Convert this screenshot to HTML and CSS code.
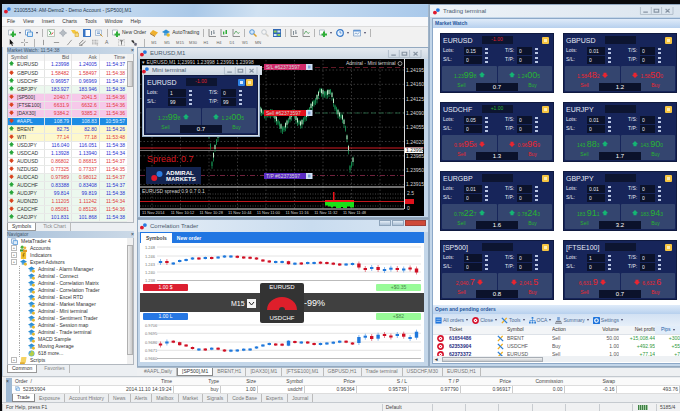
FILE: index.html
```html
<!DOCTYPE html>
<html lang="en">
<head>
    <meta charset="UTF-8">
    <meta name="viewport" content="width=device-width, initial-scale=1.0">
    <title>21005534: AM-Demo2 - Demo Account - [SP500],M1</title>
    <link rel="stylesheet" href="styles.css">
</head>
<body>
    <svg class="defs" aria-hidden="true">
        <symbol id="i-logo" viewBox="0 0 8 8"><circle cx="5.6" cy="2.4" r="2.2" fill="#2a7be0"/><circle cx="2.2" cy="5.2" r="2.2" fill="#e0182c"/></symbol>
        <symbol id="i-win" viewBox="0 0 30 7"><path d="M.5 0v6.500h28.500v-6.500M10 0v6M19 0v6" fill="none" stroke="#a9b6c4" stroke-width=".7"/><path d="M3 4.500h4M12.500 2h4v2.500h-4zM22.500 1.800l3.500 3M26 1.800l-3.500 3" fill="none" stroke="#8794a3"/></symbol>
        <symbol id="i-up" viewBox="0 0 8 8"><path d="M4 0l4 4-2 .6V7H2V4.600L0 4z" fill="currentColor"/></symbol>
        <symbol id="i-down" viewBox="0 0 8 8"><path d="M4 8L0 4l2-.6V1h4v2.400L8 4z" fill="currentColor"/></symbol>
        <symbol id="i-ea" viewBox="0 0 8 8"><path d="M0 3l4-2.500L8 3 4 5z" fill="#2e8fd4"/><path d="M2 4.200h4v2.300H2z" fill="#58a9dc"/><circle cx="6.200" cy="6" r="1.700" fill="#e8b92e"/></symbol>
        <symbol id="i-doc" viewBox="0 0 8 8"><path d="M.5 1h5v5h-5z" fill="#fff" stroke="#7ea3cf"/><path d="M2.500 3h5v4.500h-5z" fill="#dcebf9" stroke="#5b9bd8"/></symbol>
        <symbol id="i-people" viewBox="0 0 8 8"><circle cx="2.500" cy="2.500" r="1.800" fill="#4caf3b"/><path d="M0 7.500V5h5v2.500z" fill="#3c9b34"/><circle cx="5.600" cy="3.200" r="1.600" fill="#f0b43c"/><path d="M3.500 8V5.400h4.500V8z" fill="#e19b26"/></symbol>
        <symbol id="i-fx" viewBox="0 0 8 8"><path d="M1 0h6v8H1z" fill="#f3c22e"/><path d="M5.500 1.500H4.200L3.600 6M2.800 3.600h2.400" fill="none" stroke="#8b6510" stroke-width=".8"/></symbol>
        <symbol id="i-globe" viewBox="0 0 8 8"><circle cx="4" cy="4" r="3.500" fill="#58a9dc"/><path d="M1 5q3-3 3-4.500Q8 2 6.500 6q-3 2-5.500-1z" fill="#b5cf45"/></symbol>
        <symbol id="i-script" viewBox="0 0 8 8"><path d="M1.500 0h6l-1 6.500h-6z" fill="#f6d363"/><path d="M0 6h5.500v2H0z" fill="#e3ad2b"/></symbol>
        <symbol id="i-add" viewBox="0 0 8 8"><path d="M.5 1h5v5h-5z" fill="#fff" stroke="#9aa7b5" stroke-width=".7"/><path d="M4 2.500h2v2h2v2H6v1.500H4V6.500H2.500v-2H4z" fill="#2fae38"/></symbol>
        <symbol id="i-market" viewBox="0 0 8 8"><path d="M.5.500h7v7h-7z" fill="#f8faf7" stroke="#9fb0a0" stroke-width=".7"/><path d="M2 1.500l2 2.500L2.500 6" fill="none" stroke="#3aa64b"/><path d="M4.500 5.500l1.500-2" stroke="#d33"/></symbol>
        <symbol id="i-target" viewBox="0 0 8 8"><circle cx="4" cy="4" r="2.200" fill="none" stroke="#8b96a1" stroke-width=".8"/><path d="M4 0v8M0 4h8" stroke="#8b96a1" stroke-width=".7"/></symbol>
        <symbol id="i-star" viewBox="0 0 8 8"><path d="M0 1h4l1 1.500h2v2H2z" fill="#f5c73d"/><path d="M4 4h3.500v3.500H4z" fill="#f7dc7f" stroke="#d59f25" stroke-width=".6"/></symbol>
        <symbol id="i-panel" viewBox="0 0 8 8"><path d="M.5.500h7v7h-7z" fill="#fff" stroke="#3975c4"/><path d="M0 0h2.500v8H0z" fill="#3975c4"/></symbol>
        <symbol id="i-tester" viewBox="0 0 8 8"><path d="M.5 1h6v5.500h-6z" fill="#eef4fb" stroke="#8fa9c9" stroke-width=".7"/><path d="M2 3h3M2 4.500h3" stroke="#5f8bc0" stroke-width=".7"/><path d="M5 5l2.500 2.500" stroke="#d69a2b"/></symbol>
        <symbol id="i-book" viewBox="0 0 8 8"><path d="M0 4l3-3 5 2.500L5 7z" fill="#efb02d"/><path d="M0 4l5 3v1L0 5z" fill="#a86b18"/></symbol>
        <symbol id="i-bars" viewBox="0 0 8 8"><path d="M1 0v7.500h7" fill="none" stroke="#777" stroke-width=".8"/><path d="M3.500 2v4M5.800 1v4M3 3h.5M5.800 4h1" stroke="#6b7884" stroke-width=".8"/></symbol>
        <symbol id="i-candles" viewBox="0 0 8 8"><path d="M1 0v7.500h7" fill="none" stroke="#777" stroke-width=".8"/><path d="M3 2.500h1.300v3H3zM5.500 1h1.500v4H5.500z" fill="#2fae38"/></symbol>
        <symbol id="i-line" viewBox="0 0 8 8"><path d="M1 0v7.500h7" fill="none" stroke="#777" stroke-width=".8"/><path d="M2 5l2-3 2 2.500 1.500-1" fill="none" stroke="#4e9e58" stroke-width=".8"/></symbol>
        <symbol id="i-zoom" viewBox="0 0 8 8"><path d="M4.500 4.500l3 3" stroke="#dba22e" stroke-width="1.500"/><circle cx="3" cy="3" r="2.300" fill="#cfe6fb" stroke="#4a8ed2" stroke-width=".9"/></symbol>
        <symbol id="i-zoomout" viewBox="0 0 8 8"><path d="M4.500 4.500l3 3" stroke="#d0cbc1" stroke-width="1.400"/><circle cx="3" cy="3" r="2.300" fill="#f5f5f5" stroke="#bcc4cb" stroke-width=".9"/></symbol>
        <symbol id="i-tile" viewBox="0 0 8 8"><path d="M0 0h8v8H0z" fill="#2f67b3"/><path d="M.8 1.600h2.800v2H.8zM4.400 5h2.800v2H4.400z" fill="#8fd055"/><path d="M4.400 1.600h2.800v2H4.400zM.8 5h2.800v2H.8z" fill="#d8e7f7"/></symbol>
        <symbol id="i-clock" viewBox="0 0 8 8"><circle cx="4" cy="4" r="3.300" fill="#e9f3fd" stroke="#3577c8" stroke-width="1.200"/><path d="M4 2v2h1.500" fill="none" stroke="#3577c8" stroke-width=".7"/></symbol>
        <symbol id="i-template" viewBox="0 0 8 8"><path d="M.5 1h7v6h-7z" fill="#f3f8fd" stroke="#7398c4" stroke-width=".7"/><path d="M.5 1h7v1.500h-7z" fill="#5f94d4"/><path d="M1.500 5l1.500-1 1.500 1L6.500 3.500" fill="none" stroke="#4879b4" stroke-width=".6"/></symbol>
        <symbol id="i-cursor" viewBox="0 0 8 8"><path d="M2 0v6.500l1.500-1.300L4.600 8l1-.5-1.100-2.500H6.500z" fill="#111"/></symbol>
        <symbol id="i-cross" viewBox="0 0 8 8"><path d="M4 0v3M4 5v3M0 4h3M5 4h3" stroke="#777" stroke-width=".7"/></symbol>
        <symbol id="i-dash" viewBox="0 0 8 8"><path d="M1 4h6" stroke="#777" stroke-width=".8"/></symbol>
        <symbol id="i-vline" viewBox="0 0 8 8"><path d="M4 1v6" stroke="#777" stroke-width=".8"/></symbol>
        <symbol id="i-slash" viewBox="0 0 8 8"><path d="M1.500 7L6.500 1" stroke="#777" stroke-width=".8"/></symbol>
        <symbol id="i-channel" viewBox="0 0 8 8"><path d="M0 6l5-5M2 7.500l5.500-5M0 7h4" stroke="#555" stroke-width=".8"/></symbol>
        <symbol id="i-fibo" viewBox="0 0 8 8"><path d="M0 1.500h7M0 3.500h7M0 5.500h7M6 5v2.500" stroke="#777" stroke-width=".7" stroke-dasharray="1.200 .5"/></symbol>
        <symbol id="i-label" viewBox="0 0 8 8"><path d="M.5.500h7v7h-7z" fill="none" stroke="#999" stroke-width=".6" stroke-dasharray="1 .7"/><path d="M2 2h4M4 2v4.500" stroke="#444" stroke-width=".8"/></symbol>
        <symbol id="i-arrows" viewBox="0 0 8 8"><path d="M0 2l2.500-1 1.500 3-1 1z" fill="#333"/><path d="M4 4l3 1-1 3-2.500-1z" fill="#667"/></symbol>
        <symbol id="i-close" viewBox="0 0 8 8"><circle cx="4" cy="4" r="3" fill="#fff" stroke="#d6112b" stroke-width="1.800"/><path d="M3 3l2 2M5 3L3 5" stroke="#d6112b" stroke-width=".8"/></symbol>
        <symbol id="i-tools" viewBox="0 0 8 8"><path d="M1 7l5.500-6" stroke="#f2b01e" stroke-width="1.600"/><path d="M1 1l6 6" stroke="#2f7fd6" stroke-width="1.600"/></symbol>
        <symbol id="i-list" viewBox="0 0 8 8"><path d="M.5.500h7v7h-7z" fill="#1c73dc"/><path d="M1.500 2.500h5M1.500 5h5" stroke="#a8ccf5"/></symbol>
        <symbol id="i-tree" viewBox="0 0 8 8"><path d="M3 0h2v2H3zM0 5.500h2v2H0zM3 5.500h2v2H3zM6 5.500h2v2H6z" fill="#2f7fd6"/><path d="M4 2v3.500M1 5.500V4h6v1.500" fill="none" stroke="#2f7fd6" stroke-width=".7"/></symbol>
        <symbol id="i-sum" viewBox="0 0 8 8"><path d="M2.500 0h3v4h-3z" fill="#7ba4d8"/><path d="M0 7h8M1 5h6" stroke="#4b4b55" stroke-width=".9"/></symbol>
        <symbol id="i-gear" viewBox="0 0 8 8"><rect width="8" height="8" rx="1" fill="#1c73dc"/><circle cx="4" cy="4" r="2" fill="none" stroke="#fff" stroke-width="1.300"/></symbol>
    </svg>

    <div class="desktop">
        <header class="app-head">
            <div class="titlebar main-title"><svg class="ico"><use href="#i-logo"/></svg><span>21005534: AM-Demo2 - Demo Account - [SP500],M1</span></div>
            <nav class="menu">
                <button>File</button><button>View</button><button>Insert</button><button>Charts</button><button>Tools</button><button>Window</button><button>Help</button>
            </nav>
            <div class="toolbar" id="toolbar-main"></div>
            <div class="toolbar drawing" id="toolbar-draw"></div>
        </header>

        <aside class="side">
            <h2 class="dock-title">Market Watch: 11:54:38 <b>×</b></h2>
            <div class="dock-body">
                <table class="watch">
                    <thead><tr><th>Symbol</th><th>Bid</th><th>Ask</th><th>Time</th></tr></thead>
                    <tbody id="watch-rows"></tbody>
                </table>
                <div class="vscroll"><i></i></div>
            </div>
            <div class="dock-tabs"><button class="on">Symbols</button><button>Tick Chart</button></div>
            <h2 class="dock-title">Navigator <b>×</b></h2>
            <div class="dock-body">
                <ul class="tree" id="tree"></ul>
                <div class="vscroll nav-scroll"><i></i></div>
            </div>
            <div class="dock-tabs"><button class="on">Common</button><button>Favorites</button></div>
        </aside>

        <main class="mdi">
            <section class="window chart-window">
                <div class="titlebar"><svg class="ico"><use href="#i-logo"/></svg><span>EURUSD,M1</span><svg class="win"><use href="#i-win"/></svg></div>
                <div class="chart-area">
                    <svg class="chart" id="price-chart" viewBox="140 59 284 157"></svg>
                    <div class="mini">
                        <div class="titlebar"><svg class="ico"><use href="#i-logo"/></svg><span>Mini terminal</span><svg class="win"><use href="#i-win"/></svg></div>
                        <div id="mini-card"></div>
                    </div>
                    <div class="brand">
                        <svg class="brand-mark" viewBox="0 0 12 10"><circle cx="8.500" cy="3" r="3" fill="#2a7be0"/><circle cx="3.200" cy="7" r="3" fill="#e0182c"/></svg>
                        <span>ADMIRAL<br>MARKETS</span>
                    </div>
                    <div class="spread-note">Spread: 0.7</div>
                </div>
            </section>

            <section class="window corr-window">
                <div class="titlebar"><svg class="ico"><use href="#i-logo"/></svg><span>Correlation Trader</span><span class="caption-btns"><i></i><i></i><i></i></span></div>
                <div class="corr-tabs"><button class="on">Symbols</button><button>New order</button></div>
                <div class="corr-body">
                    <svg class="corr-chart" id="corr-top" viewBox="140 243 284 40"></svg>
                    <div class="badges"><span class="badge sell">1.00 $</span><span class="badge profit">+$0.35</span></div>
                    <div class="band">
                        <label class="period"><select aria-label="Period"><option>M15</option></select><svg viewBox="0 0 9 9"><path d="M0 0h9v9H0z" fill="#f4f4f4"/><path d="M2 3l2.500 3L7 3" fill="none" stroke="#222"/></svg></label>
                        <div class="gauge">
                            <span>EURUSD</span>
                            <svg viewBox="0 0 32 16"><path d="M1 15a15 13 0 0 1 30 0h-12a3 3 0 0 0-6 0z" fill="#de1f2b"/></svg>
                            <span>USDCHF</span>
                        </div>
                        <span class="percent">-99%</span>
                    </div>
                    <div class="badges"><span class="badge buy">1.00 L</span><span class="badge profit">+$82</span></div>
                    <svg class="corr-chart" id="corr-bottom" viewBox="140 322 284 39"></svg>
                </div>
            </section>
        </main>

        <section class="window terminal">
            <div class="titlebar"><svg class="ico"><use href="#i-logo"/></svg><span>Trading terminal</span><svg class="win"><use href="#i-win"/></svg></div>
            <div class="terminal-body">
                <h3>Market Watch</h3>
                <div class="cards" id="cards"></div>
                <h3>Open and pending orders</h3>
                <div class="order-tools">
                    <button><svg class="ico"><use href="#i-list"/></svg>All orders<i class="caret"></i></button>
                    <button><svg class="ico"><use href="#i-close"/></svg>Close<i class="caret"></i></button>
                    <button><svg class="ico"><use href="#i-tools"/></svg>Tools<i class="caret"></i></button>
                    <button><svg class="ico"><use href="#i-tree"/></svg>OCA<i class="caret"></i></button>
                    <button><svg class="ico"><use href="#i-sum"/></svg>Summary<i class="caret"></i></button>
                    <button><svg class="ico"><use href="#i-gear"/></svg>Settings<i class="caret"></i></button>
                </div>
                <div class="orders-wrap">
                    <table class="orders">
                        <colgroup><col class="c-ico"><col class="c-ticket"><col class="c-ico"><col class="c-symbol"><col class="c-action"><col class="c-vol"><col class="c-profit"><col></colgroup>
                        <thead><tr><th></th><th>Ticket</th><th></th><th>Symbol</th><th>Action</th><th class="num">Volume</th><th class="num">Net profit</th><th class="sorted num">Pips <i class="caret"></i></th></tr></thead>
                        <tbody id="orders"></tbody>
                    </table>
                </div>
                <div class="hscroll"><b>◂</b><i></i></div>
            </div>
        </section>

        <nav class="chart-tabs">
            <button>#AAPL,Daily</button><button class="on">[SP500],M1</button><button>BRENT,H1</button><button>[DAX30],M1</button><button>[FTSE100],M1</button><button>GBPUSD,H1</button><button>Trade terminal</button><button>USDCHF,M30</button><button>EURUSD,H1</button>
        </nav>

        <section class="trade">
            <div class="trade-grip">×</div>
            <div class="trade-main">
                <table class="positions">
                    <colgroup><col class="c-order"><col class="c-time"><col class="c-std"><col class="c-size"><col class="c-std"><col class="c-wide"><col class="c-wide"><col class="c-wide"><col class="c-wide"><col class="c-wide"><col class="c-wide"><col></colgroup>
                    <thead><tr><th>Order &nbsp;/</th><th>Time</th><th>Type</th><th>Size</th><th>Symbol</th><th>Price</th><th>S / L</th><th>T / P</th><th>Price</th><th>Commission</th><th>Swap</th><th></th></tr></thead>
                    <tbody><tr><td><svg class="ico"><use href="#i-doc"/></svg>52353904</td><td>2014.11.10 14:19:24</td><td>buy</td><td>1.00</td><td>usdchf</td><td>0.96364</td><td>0.95739</td><td>0.97790</td><td>0.96917</td><td>0.00</td><td>-0.16</td><td>493.76</td></tr></tbody>
                </table>
                <div class="trade-tabs">
                    <button class="on">Trade</button><button>Exposure</button><button>Account History</button><button>News</button><button>Alerts</button><button>Mailbox</button><button>Market</button><button>Signals</button><button>Code Base</button><button>Experts</button><button>Journal</button>
                </div>
            </div>
        </section>

        <footer class="status">
            <span class="help">For Help, press F1</span>
            <span class="profile">Default</span>
            <span></span><span></span><span></span><span></span><span></span><span></span>
            <span class="signal"><i></i></span>
            <span class="traffic">5185/4</span>
        </footer>
    </div>

    <script src="script.js"></script>
</body>
</html>
```

FILE: styles.css
```css
* {
    box-sizing: border-box;
}

body {
    margin: 0;
    background: #0a0a0c;
    font-family: "Liberation Sans", Arial, sans-serif;
    font-size: 5px;
    line-height: 7px;
    color: #333;
}

button, input, select {
    font: inherit;
    color: inherit;
    margin: 0;
    padding: 0;
    border: 0;
    background: none;
}

h2, h3, ul {
    margin: 0;
    padding: 0;
    font-size: 5px;
    list-style: none;
}

table {
    border-collapse: collapse;
    table-layout: fixed;
    width: 100%;
}

th, td {
    padding: 0;
    font-weight: normal;
    text-align: left;
    white-space: nowrap;
    overflow: hidden;
}

.defs {
    display: none;
}

.ico {
    width: 7px;
    height: 7px;
    flex: none;
}

.win {
    width: 42px;
    height: 8px;
    margin-left: auto;
}

.caret {
    display: inline-block;
    border: 1px solid transparent;
    border-top: 2px solid #446;
    border-bottom: 0;
    margin-left: 1px;
}

.desktop {
    display: grid;
    grid-template-columns: 135px minmax(0, 1fr) 251px;
    grid-template-rows: auto 1fr auto auto auto;
    min-height: 100vh;
    padding: 4px 0 0 2px;
}

/* Title bars and frames */
.titlebar {
    display: flex;
    align-items: center;
    gap: 3px;
    height: 11px;
    padding: 0 2px;
    color: #4a5a6c;
    font-size: 6px;
    white-space: nowrap;
}

.main-title {
    height: 13px;
    font-size: 5px;
    background: linear-gradient(100deg, #b3cfeb, #c6dbf0 25%, #a9c8e8 45%, #cfe1f2 60%, #a8c8ea);
    color: #26384c;
}

.window {
    background: #c3d6e9;
    border: 1px solid #93a9c0;
}

/* Head */
.app-head {
    grid-column: 1 / 3;
    background: #f1f1f1;
    border-right: 1px solid #9fb3c8;
}

.menu {
    display: flex;
    gap: 8px;
    height: 9px;
    padding: 0 5px;
    background: #f7f8fa;
}

.toolbar {
    display: flex;
    align-items: center;
    gap: 4px;
    height: 12px;
    padding-left: 6px;
    white-space: nowrap;
    border-top: 1px solid #dcdcdc;
}

.toolbar button {
    display: flex;
    align-items: center;
    gap: 2px;
    min-width: 8px;
}

.toolbar .ico {
    width: 8px;
    height: 8px;
}

.toolbar .sep {
    width: 1px;
    height: 8px;
    background: #b5b5b5;
}

.drawing {
    height: 9px;
    gap: 5px;
    border: 0;
    color: #666;
}

.drawing .ico {
    width: 7px;
    height: 7px;
}

.drawing .frame {
    min-width: 8px;
    justify-content: center;
    font-size: 4px;
}

/* Left docks */
.side {
    grid-row: 2 / 4;
    display: flex;
    flex-direction: column;
    padding: 0 3px 0 4px;
    background: #eceff2;
    border-left: 1px solid #b5cbe2;
}

.dock-title {
    display: flex;
    justify-content: space-between;
    height: 7px;
    font-weight: normal;
    color: #44586e;
    background: linear-gradient(90deg, #a9c1da, #cbd9e7);
}

.dock-body {
    display: flex;
    background: #fff;
    border: 1px solid #b2b8bf;
    border-top: 0;
}

.watch th {
    height: 7px;
    color: #555;
    background: #f4f4f4;
}

.watch th:first-child {
    width: 36px;
    padding-left: 3px;
}

.watch th + th, .watch td + td {
    text-align: right;
    padding-right: 2px;
    border-left: 1px solid #e4e4e4;
}

.watch td {
    height: 8px;
    border-bottom: 1px solid #e8eae8;
}

.watch td:first-child {
    padding-left: 1px;
}

.watch .ico {
    width: 5px;
    height: 5px;
    margin-right: 3px;
    color: #d9401c;
}

.watch .up .ico {
    color: #27a53a;
}

.watch .up td + td {
    color: #2a31cf;
}

.watch .down td + td {
    color: #e0393b;
}

.watch .pink {
    background: #f6c9ea;
}

.watch .yellow {
    background: #fdf8cc;
}

.watch .green {
    background: #ecf8ee;
}

.watch .selected, .watch .selected td + td {
    background: #1d8ce4;
    color: #e3f2ff;
}

.vscroll {
    flex: none;
    width: 6px;
    background: #f0f0f0;
}

.vscroll i {
    display: block;
    height: 26px;
    margin: 7px 0 0;
    background: linear-gradient(90deg, #eee, #ccc);
    border: 1px solid #b0b0b0;
}

.nav-scroll i {
    height: 110px;
}

.dock-tabs {
    display: flex;
    gap: 3px;
    height: 8px;
    color: #888;
}

.dock-tabs button {
    padding: 0 4px;
    border-right: 1px solid #bbb;
}

.dock-tabs .on {
    color: #333;
    background: #fff;
    border: 1px solid #999;
    border-top: 0;
}

.tree {
    flex: 1;
    padding-left: 3px;
}

.tree li {
    display: flex;
    align-items: center;
    gap: 3px;
    height: 7px;
    white-space: nowrap;
}

.tree .lvl1::before {
    content: '+';
    width: 4px;
    height: 4px;
    font-size: 4px;
    line-height: 3px;
    text-align: center;
    border: 1px solid #bbb;
}

.tree .lvl2 {
    margin-left: 8px;
    padding-left: 8px;
    border-left: 1px dotted #aaa;
}

/* Chart windows */
.mdi {
    display: flex;
    flex-direction: column;
    gap: 1px;
    background: #8fa1b5;
}

.mdi .window {
    padding: 0 4px 1px 2px;
}

.corr-window {
    flex: 1;
}

.chart-window .titlebar {
    background: linear-gradient(#e5eaf0, #cdd8e3);
    margin: 0 -4px 0 -2px;
}

.chart-area {
    position: relative;
    background: #000;
}

.chart {
    display: block;
    width: 100%;
}

.chart text {
    fill: #d5d5d5;
    font-size: 5px;
}

.chart .times text {
    font-size: 4px;
}

.mini {
    position: absolute;
    left: 2px;
    top: 6px;
    width: 118px;
    padding: 0 1px 1px;
    background: #d5dfea;
    border: 1px solid #8fa7c1;
}

.mini .titlebar {
    height: 9px;
    padding: 0;
}

.brand {
    position: absolute;
    left: 6px;
    top: 108px;
    display: flex;
    align-items: center;
    gap: 3px;
    height: 17px;
    padding: 0 5px;
    background: #13234f;
    color: #fff;
    font-size: 6px;
    font-weight: bold;
    line-height: 6px;
}

.brand-mark {
    width: 12px;
    height: 10px;
}

.spread-note {
    position: absolute;
    left: 7px;
    top: 95px;
    color: #d71920;
    font-size: 9px;
    line-height: 10px;
}

.corr-window .titlebar {
    height: 12px;
    background: linear-gradient(90deg, #e6eef6, #c9dcef 60%, #d9e6f3);
    margin: 0 -4px 0 -2px;
}

.caption-btns {
    display: flex;
    align-self: flex-start;
    gap: 1px;
    margin-left: auto;
}

.caption-btns i {
    width: 12px;
    height: 6px;
    background: linear-gradient(#e3edf6, #aabfd4);
    border: 1px solid #8ea4ba;
}

.caption-btns i:last-child {
    width: 21px;
    background: #cf4a38;
    border-color: #a04038;
}

.corr-tabs {
    display: flex;
    height: 11px;
    padding: 1px 1px 0;
    background: #2176e2;
    color: #fff;
    font-weight: bold;
}

.corr-tabs button {
    padding: 0 5px;
}

.corr-tabs .on {
    background: #fff;
    color: #444;
}

.corr-body {
    background: #fff;
    padding-bottom: 1px;
}

.corr-chart {
    display: block;
    width: 100%;
}

.corr-chart text {
    fill: #777;
    font-size: 4px;
}

.badges {
    display: flex;
    justify-content: space-between;
    height: 10px;
    padding: 1px 3px;
}

.badge {
    width: 45px;
    height: 7px;
    border-radius: 1px;
    text-align: center;
    color: #fff;
}

.badge.sell {
    background: #dc1f30;
}

.badge.buy {
    background: #2677e3;
}

.badge.profit {
    background: #98fb98;
    color: #4a8a4c;
}

.band {
    position: relative;
    display: grid;
    grid-template-columns: 1fr 44px 1fr;
    align-items: center;
    height: 19px;
    background: #404040;
    color: #fff;
}

.period {
    display: flex;
    justify-content: flex-end;
    align-items: center;
    gap: 2px;
    padding-right: 4px;
}

.period select {
    appearance: none;
    font-size: 7px;
    line-height: 9px;
    height: 9px;
}

.period svg {
    width: 9px;
    height: 9px;
}

.gauge {
    grid-column: 2;
    display: flex;
    flex-direction: column;
    align-items: center;
    justify-content: space-between;
    height: 40px;
    margin: -10px 0;
    padding: 1px 0;
    position: relative;
    background: #333;
    border-radius: 2px;
    font-size: 6px;
}

.gauge svg {
    width: 32px;
    height: 16px;
}

.percent {
    font-size: 9px;
    line-height: 10px;
}

/* Trading terminal */
.terminal {
    grid-column: 3;
    grid-row: 1 / 3;
    display: flex;
    flex-direction: column;
    padding: 0 0 2px 2px;
    border-right: 0;
}

.terminal .titlebar {
    height: 12px;
    margin: 0 0 1px -2px;
    padding-left: 3px;
    background: linear-gradient(90deg, #eef3f8, #dbe5ef);
}

.terminal-body {
    flex: 1;
    background: #fff;
    border: 1px solid #8ca8c8;
    border-right: 0;
}

.terminal h3 {
    height: 9px;
    padding: 1px 2px;
    color: #26579c;
    background: linear-gradient(#dfebf9, #b7d0ee);
}

.cards {
    display: grid;
    grid-template-columns: repeat(2, minmax(0, 1fr));
    gap: 9px;
    padding: 5px 3px 5px 7px;
}

.card {
    height: 60px;
    display: flex;
    flex-direction: column;
    justify-content: space-between;
    padding: 2px 1px 1px;
    background: #17255a;
    color: #e6eaf5;
    border: 1px solid #101a40;
}

.card-head {
    display: grid;
    grid-template-columns: 1fr 31px 1fr;
    align-items: center;
    height: 8px;
    padding: 0 1px;
}

.card-head strong {
    font-size: 7px;
    font-weight: normal;
}

.card-head output {
    height: 8px;
    text-align: center;
    background: #0d1531;
}

.card-icons {
    display: flex;
    justify-content: flex-end;
    gap: 1px;
    padding-right: 2px;
}

.card-icons i {
    width: 7px;
    height: 7px;
    border: 2px solid #f6c542;
    border-radius: 1px;
    background: #fdecb4;
}

.card-icons .info {
    border-color: #2f84e6;
    background: #d4e8ff;
}

.fields {
    display: grid;
    grid-template-columns: 62px 1fr;
    row-gap: 1px;
    padding: 0 1px;
}

.fields label {
    display: grid;
    grid-template-columns: 20px 18px 5px;
    column-gap: 1px;
    align-items: center;
}

.fields label:nth-child(even) {
    grid-template-columns: 11px 15px 5px;
}

.fields input {
    width: 100%;
    height: 8px;
    padding-left: 2px;
    background: #0b122b;
}

.spin {
    width: 3px;
    height: 6px;
    border: solid #b9c6e4;
    border-width: 2px 0;
    justify-self: end;
}

.deal {
    position: relative;
    display: grid;
    grid-template-columns: 1fr 1fr;
    gap: 1px;
}

.deal button {
    height: 25px;
    padding: 2px 2px 0;
    background: #34456f;
    border-radius: 1px;
    color: #27b432;
}

.deal.down button {
    color: #ea2530;
}

.price {
    display: flex;
    justify-content: center;
    align-items: center;
    gap: 2px;
    height: 12px;
    line-height: 12px;
}

.price b {
    font-size: 9px;
    font-weight: normal;
}

.price .ico {
    width: 6px;
    height: 6px;
    color: #14b574;
}

.down .price .ico {
    color: #ea2530;
}

.side-name {
    display: block;
    width: 35px;
    line-height: 9px;
}

.deal button + button .side-name {
    margin-left: auto;
}

.deal output {
    position: absolute;
    left: 31%;
    right: 31%;
    bottom: 0;
    height: 8px;
    background: #0b122b;
    color: #fff;
    font-size: 6px;
    line-height: 8px;
    text-align: center;
}

.order-tools {
    display: flex;
    gap: 4px;
    height: 12px;
    padding-left: 2px;
    background: linear-gradient(#d2e1f3, #e6eff9);
    color: #4b6a94;
    white-space: nowrap;
}

.order-tools button {
    display: flex;
    align-items: center;
    gap: 1px;
}

.orders-wrap {
    height: 30px;
    overflow: hidden;
}

.orders th {
    height: 8px;
    background: #f3f5f7;
    border-bottom: 1px solid #dde2e8;
}

.orders td {
    height: 8px;
    line-height: 7px;
    color: #555;
}

.orders .ico {
    display: block;
}

.orders td:nth-child(1) .ico {
    margin-left: 4px;
}

.orders td:nth-child(2) {
    color: #1e2a80;
    font-weight: bold;
}

.orders .num {
    text-align: right;
}

.orders .gain {
    color: #2f9a3c;
}

.orders .sorted {
    color: #2a62a8;
    background: #e1edfa;
    padding-right: 5px;
}

.c-ico { width: 16px; }
.c-ticket { width: 48px; }
.c-ico + .c-symbol { width: 45px; }
.c-ticket + .c-ico { width: 10px; }
.c-action { width: 42px; }
.c-vol { width: 25px; }
.c-profit { width: 36px; }

.hscroll {
    display: flex;
    align-items: center;
    gap: 4px;
    height: 6px;
    padding-left: 2px;
    background: #eef1f4;
}

.hscroll i {
    width: 101px;
    height: 5px;
    background: linear-gradient(#f2f2f2, #c6cace);
    border: 1px solid #a8aeb5;
}

/* Bottom tabs, positions and status bar */
.chart-tabs {
    grid-column: 2 / 4;
    display: flex;
    height: 9px;
    padding-left: 3px;
    background: #eef0f2;
    border-top: 1px solid #a9bacb;
    color: #777;
    white-space: nowrap;
}

.chart-tabs button, .trade-tabs button {
    padding: 0 4px;
    border-right: 1px solid #bbb;
}

.chart-tabs .on, .trade-tabs .on {
    color: #333;
    background: #fff;
    border: 1px solid #888;
    border-top: 0;
}

.trade {
    grid-column: 1 / 4;
    display: flex;
    padding: 1px 0 0 4px;
    background: #eceef0;
    border-top: 1px solid #c3c9cf;
}

.trade-grip {
    width: 6px;
    background: #9fb9d3;
}

.trade-main {
    flex: 1;
}

.positions {
    background: #fff;
    color: #444;
}

.positions th {
    height: 8px;
    background: #fafafa;
    border-bottom: 1px solid #ddd;
}

.positions td {
    height: 8px;
    border-right: 1px solid #ccc;
    border-bottom: 1px solid #ddd;
}

.positions th:first-child, .positions td:first-child {
    padding-left: 3px;
}

.positions th + th, .positions td + td {
    text-align: right;
    padding-right: 1px;
}

.positions .ico {
    width: 5px;
    height: 5px;
    margin-right: 3px;
}

.c-order { width: 67px; }
.c-time { width: 94px; }
.c-std { width: 47px; }
.c-size { width: 37px; }
.c-wide { width: 52px; }

.trade-tabs {
    display: flex;
    height: 8px;
    color: #777;
}

.status {
    grid-column: 1 / 4;
    display: flex;
    align-items: center;
    height: 9px;
    background: #f0f1f2;
    border-top: 1px solid #c5cacf;
    color: #444;
}

.status span {
    flex: 1;
    height: 7px;
    padding-left: 3px;
    border-left: 1px solid #c8ccd0;
}

.status .help {
    flex: none;
    width: 56%;
}

.status .profile {
    flex: none;
    width: 50px;
}

.status .signal {
    flex: none;
    width: 24px;
    padding: 1px 5px;
}

.status .signal i {
    display: block;
    width: 10px;
    height: 5px;
    background: repeating-linear-gradient(90deg, #3f7f45 0 1px, #9fc99f 1px 2px);
}

.status .traffic {
    flex: none;
    width: 24px;
}
```

FILE: script.js
```js
const icon = (name) => `<svg class="ico"><use href="#i-${name}"/></svg>`;
const put = (id, html) => { document.getElementById(id).innerHTML = html; };

// ---- toolbars ----
const mainTools = [
    ['add', '', 1], ['doc', '', 1], '|', ['market'], ['target'], ['star'], ['panel'], ['tester'], '|',
    ['add', 'New Order'], ['book'], ['ea', 'AutoTrading'], '|',
    ['bars'], ['candles'], ['line'], '|', ['zoom'], ['zoomout'], ['tile'], '|', ['bars'], ['line'], '|',
    ['add', '', 1], ['clock', '', 1], ['template', '', 1], '|'
];
put('toolbar-main', mainTools.map(t => t === '|' ? '<span class="sep"></span>'
    : `<button aria-label="${t[1] || t[0]}">${icon(t[0])}${t[1] || ''}${t[2] ? '<i class="caret"></i>' : ''}</button>`).join(''));

const drawTools = ['cursor', 'cross', '|', 'vline', 'dash', 'slash', 'channel', 'fibo', 'A', 'label', 'arrows', '|'];
put('toolbar-draw', drawTools.map(t => t === '|' ? '<span class="sep"></span>'
    : `<button aria-label="${t}">${t === 'A' ? 'A' : icon(t)}</button>`).join('') +
    ['M1', 'M5', 'M15', 'M30', 'H1', 'H4', 'D1', 'W1', 'MN'].map(t => `<button class="frame">${t}</button>`).join(''));

// ---- market watch ----
const watch = [
    ['EURUSD', '1.23998', '1.24005', '11:54:37', 1, ''],
    ['GBPUSD', '1.58482', '1.58497', '11:54:38', 0, ''],
    ['USDCHF', '0.96957', '0.96969', '11:54:37', 1, ''],
    ['GBPJPY', '183.927', '183.946', '11:54:38', 1, 'green'],
    ['[SP500]', '2040.7', '2041.5', '11:54:36', 0, 'pink'],
    ['[FTSE100]', '6631.9', '6632.6', '11:54:36', 0, 'pink'],
    ['[DAX30]', '9384.2', '9385.2', '11:54:36', 0, 'pink'],
    ['#AAPL', '108.79', '108.83', '10:59:57', 0, 'selected'],
    ['BRENT', '82.75', '82.80', '11:54:26', 1, 'yellow'],
    ['WTI', '77.14', '77.18', '11:53:48', 0, 'yellow'],
    ['USDJPY', '116.040', '116.051', '11:54:38', 1, ''],
    ['USDCAD', '1.13928', '1.13940', '11:54:34', 1, ''],
    ['AUDUSD', '0.86802', '0.86815', '11:54:37', 0, ''],
    ['NZDUSD', '0.77325', '0.77337', '11:54:35', 0, ''],
    ['AUDCAD', '0.97989', '0.98012', '11:54:37', 0, 'green'],
    ['AUDCHF', '0.83388', '0.83408', '11:54:37', 1, 'green'],
    ['AUDJPY', '99.814', '99.819', '11:54:38', 1, 'green'],
    ['AUDNZD', '1.11205', '1.11242', '11:54:34', 0, 'green'],
    ['CADCHF', '0.85081', '0.85126', '11:54:36', 0, 'green'],
    ['CADJPY', '101.831', '101.868', '11:54:38', 1, 'green']
];
put('watch-rows', watch.map(([s, b, a, t, up, cls]) =>
    `<tr class="${up ? 'up' : 'down'} ${cls}"><td>${icon(up ? 'up' : 'down')}${s}</td><td>${b}</td><td>${a}</td><td>${t}</td></tr>`).join(''));

// ---- navigator ----
const tree = [
    [0, 'doc', 'MetaTrader 4'], [1, 'people', 'Accounts'], [1, 'fx', 'Indicators'], [1, 'ea', 'Expert Advisors'],
    ...['Alarm Manager', 'Connect', 'Correlation Matrix', 'Correlation Trader', 'Excel RTD', 'Market Manager',
        'Mini terminal', 'Sentiment Trader', 'Session map', 'Trade terminal'].map(n => [2, 'ea', 'Admiral - ' + n]),
    [2, 'ea', 'MACD Sample'], [2, 'ea', 'Moving Average'], [2, 'globe', '618 more...'], [1, 'script', 'Scripts']
];
put('tree', tree.map(([lvl, ic, name]) => `<li class="lvl${lvl}">${icon(ic)}${name}</li>`).join(''));

// ---- quote cards ----
// symbol, position, lots, stop, sell [small, big, tiny], buy, spread, direction
const quotes = [
    ['EURUSD', '-1.00', '0.15', '0', ['1.23', '99', '8'], ['1.24', '00', '5'], '0.7', 'up'],
    ['GBPUSD', '', '0.01', '0', ['1.58', '48', '2'], ['1.58', '50', '0'], '1.2', 'down'],
    ['USDCHF', '+1.00', '0.05', '0', ['0.96', '95', '8'], ['0.96', '96', '9'], '1.3', 'down'],
    ['EURJPY', '', '0.01', '0', ['143.', '88', '3'], ['143.', '90', '0'], '1.7', 'up'],
    ['EURGBP', '', '0.01', '0', ['0.78', '22', '7'], ['0.78', '24', '3'], '1.6', 'up'],
    ['GBPJPY', '', '0.01', '0', ['183.', '91', '1'], ['183.', '94', '3'], '3.2', 'up'],
    ['[SP500]', '', '1', '0', ['2,040.', '7', ''], ['2,041.', '5', ''], '0.8', 'down'],
    ['[FTSE100]', '', '1', '0', ['6,631.', '9', ''], ['6,632.', '6', ''], '0.7', 'down']
];

function card([sym, pos, lots, stop, sell, buy, spread, dir], target = '0', info = false) {
    const field = (name, v) => `<label>${name}<input value="${v}"><i class="spin"></i></label>`;
    const num = p => `<span>${p[0]}<b>${p[1]}</b>${p[2]}</span>`;
    const color = pos[0] === '+' ? '#27b432' : '#e0202c';
    return `<div class="card">
        <div class="card-head"><strong>${sym}</strong><output style="color:${color}">${pos}</output>
            <span class="card-icons">${info ? '<i class="info"></i>' : ''}<i></i></span></div>
        <div class="fields">${field('Lots:', lots)}${field('T/S:', '0')}${field('S/L:', stop)}${field('T/P:', target)}</div>
        <div class="deal ${dir}">
            <button><span class="price">${num(sell)}${icon(dir)}</span><span class="side-name">Sell</span></button>
            <button><span class="price">${icon(dir)}${num(buy)}</span><span class="side-name">Buy</span></button>
            <output>${spread}</output>
        </div>
    </div>`;
}
put('cards', quotes.map(q => card(q)).join(''));
put('mini-card', card(['EURUSD', '-1.00', '1', '99', ['1.23', '99', '8'], ['1.24', '00', '5'], '0.7', 'up'], '99', true));

// ---- open orders ----
put('orders', [
    ['61654486', 'BRENT', 'Sell', '50.00', '+15,008.44', '+300'],
    ['62353904', 'USDCHF', 'Buy', '1.00', '+492.95', '+55'],
    ['62373372', 'EURUSD', 'Sell', '1.00', '+77.14', '+7']
].map(([t, s, a, v, p, pips]) => `<tr><td>${icon('close')}</td><td>${t}</td><td>${icon('tools')}</td><td>${s}</td><td>${a}</td>
    <td class="num">${v}</td><td class="num gain">${p}</td><td class="num gain">${pips}</td></tr>`).join(''));

// ---- EURUSD price chart ----
function priceChart() {
    let s = '';
    for (let x = 152; x < 404; x += 28.5) s += `<path d="M${x} 60V209" stroke="#5c5c5c" stroke-width=".6" stroke-dasharray="1.5 2"/>`;
    for (let i = 0; i < 9; i++) {
        const y = 70 + i * 14.3;
        s += `<path d="M140 ${y}H404" stroke="#5c5c5c" stroke-width=".6" stroke-dasharray="1.5 2"/>`;
        s += `<text x="406" y="${y + 2}">${(1.24195 - i * 0.00035).toFixed(5)}</text>`;
    }
    s += '<path d="M259 67.5H404" stroke="#8e2436" stroke-width=".7" stroke-dasharray="5 3"/>';
    s += '<path d="M259 113H404" stroke="#2d7d52" stroke-width=".7" stroke-dasharray="5 3"/>';
    s += '<path d="M140 148H424" stroke="#d11a22"/><path d="M140 150.500H404" stroke="#a6a6a6" stroke-width=".7"/>';
    s += '<path d="M140 175.500H404" stroke="#a03058" stroke-width=".7" stroke-dasharray="5 2 1 2"/>';

    // candles interpolated between turning points
    const path = [[205, 125], [209, 133], [211, 150], [212, 164], [215, 147], [219, 132], [240, 118], [259, 109], [266, 114], [272, 112],
        [277, 120], [283, 130], [288, 121], [293, 112], [297, 120], [301, 124], [306, 116], [311, 106], [316, 100], [320, 90],
        [325, 94], [331, 91], [335, 107], [339, 114], [343, 118], [346, 130], [349, 152], [350, 168], [353, 160], [355, 151]];
    let seg = 0;
    for (let x = 206; x <= 354; x += 1.5) {
        while (path[seg + 1][0] < x) seg++;
        const [x0, y0] = path[seg], [x1, y1] = path[seg + 1];
        const y = y0 + (y1 - y0) * (x - x0) / (x1 - x0);
        const k = Math.abs(Math.sin(x * 2.7)) * 3;
        s += `<path d="M${x} ${y - 2 - k / 2}V${y + 3 + k}" stroke="#18a35c" stroke-width=".7"/>`;
        s += `<path d="M${x} ${y - 1 - k / 2}v${3 + k / 2}" stroke="${k > 1.9 ? '#bfe9c8' : '#128a4c'}" stroke-width="1"/>`;
    }

    [[64, '#cf2a6a', 'S/L #62373597'], [110, '#e0121c', 'Sell #62373597'], [173, '#5a2bc4', 'T/P #62373597']].forEach(([y, c, t]) => {
        s += `<rect x="264" y="${y}" width="42" height="6" fill="${c}"/><text x="266" y="${y + 5}">${t}</text>`;
        s += `<rect x="306" y="${y}" width="6.500" height="6" fill="#cfe0f5"/><path d="M308 ${y + 1.5}h2.500v3h-2.500z" fill="#7fa6da"/>`;
    });

    s += '<text x="142" y="64">▾ EURUSD,M1 1.23991 1.23998 1.23991 1.23998</text>';
    s += '<text x="346" y="65">Admiral - Mini terminal</text><circle cx="400" cy="63.500" r="2" fill="none" stroke="#ccc" stroke-width=".7"/>';
    s += '<path d="M404.500 59V209" stroke="#ddd"/><path d="M140 187H404M140 209H404" stroke="#ddd"/>';
    s += '<rect x="405" y="147.500" width="18" height="5.500" fill="#fff"/><text x="406" y="152" style="fill:#222">1.23998</text>';

    // spread indicator
    [194, 198, 206].forEach(y => { s += `<path d="M140 ${y}H404" stroke="#777" stroke-width=".6" stroke-dasharray="1 1.500"/>`; });
    s += '<text x="142" y="193">EURUSD spread 0.9 0.7 0.1</text><path d="M140 201.500H404" stroke="#c3161c"/>';
    s += '<path d="M325 200h29v4h-29zM333 192h1.500v8H333z" fill="#f0141c"/>';
    s += '<path d="M325 202h29v5.500h-4v-1h-3v1.500h-4v-1h-2v1h-5v-1.500h-3v1h-2v-1h-3v-1h-3z" fill="#19e019"/>';
    s += '<text x="407" y="195">2.5</text><text x="407" y="210">0</text><rect x="405" y="199" width="9" height="5" fill="#e0121c"/>';
    const times = ['11 Nov 2014', '11 Nov 10:12', '11 Nov 10:28', '11 Nov 10:44', '11 Nov 11:00', '11 Nov 11:16', '11 Nov 11:32', '11 Nov 11:48'];
    s += '<g class="times">' + times.map((t, i) => `<text x="${142 + i * 28.7}" y="214">${t}</text>`).join('') + '</g>';
    return s;
}
put('price-chart', priceChart());

// ---- correlation charts ----
// each entry: y of the body centre, r/b colour, optional body height
function corrChart(data, lines, labels) {
    let s = lines.map((y, i) => `<path d="M157 ${y}H421" stroke="${i === 4 ? '#aaa' : '#ddd'}" stroke-width=".8"/><text x="145" y="${y + 1.5}">${labels[i]}</text>`).join('');
    data.split(' ').forEach((d, i) => {
        const [, y, c, h] = d.match(/^([\d.]+)([rb])(\d*)$/);
        const x = 160.5 + i * 6.4, size = +h || 2, wick = i > 30 || i < 2 ? 2 : 0.5;
        const col = c === 'r' ? '#d01025' : '#1f78dc';
        s += `<path d="M${x} ${y - size / 2 - wick}v${size + wick * 2}" stroke="${col}" stroke-width=".5"/>`;
        s += `<rect x="${x - 1.7}" y="${y - size / 2}" width="3.400" height="${size}" fill="${col}"/>`;
    });
    return s;
}
put('corr-top', corrChart('262b 262r 263.5b 261b 260b 258.5b 258.5r 258b 258r 257.5b 256.5b 256.5b 256.8r 257.5r 257.8r 258.5r 260.5r 261.5r 262b 262b 262.7r3 263.7b 263.5r 263b 263b 262.7r 263r 263.7r 264.5r 264.5b 264b 265.5r4 269r 268b 268.5r3 270b 268.7b 269r 269.5b 268.5r 270.5r4',
    [247, 256, 264, 272, 280.5], ['1.248', '1.246', '1.243', '1.240', '1.238']));
put('corr-bottom', corrChart('344.5r 342.5b 341.7r 343.7r3 345.5r 348r 349.5b 349.5r 348.7b 348.7r 350.5r 350.7b 350.5b 349.7b 349.5b 347.5b 345.5b 344b 344.5r 344.7r 343.2b5 342r 342.5b 342.5r 344r 344b 343.5b 342.7b 341.7b 341.7r 343.5r 340b6 336.7b 337.5r3 336.7b4 335r 336.5r 335b 335.2r3 338b 334.7b6',
    [325, 333.3, 342, 350.3, 358.5], ['0.9706', '0.9695', '0.9686', '0.9671', '0.9660']));
```
